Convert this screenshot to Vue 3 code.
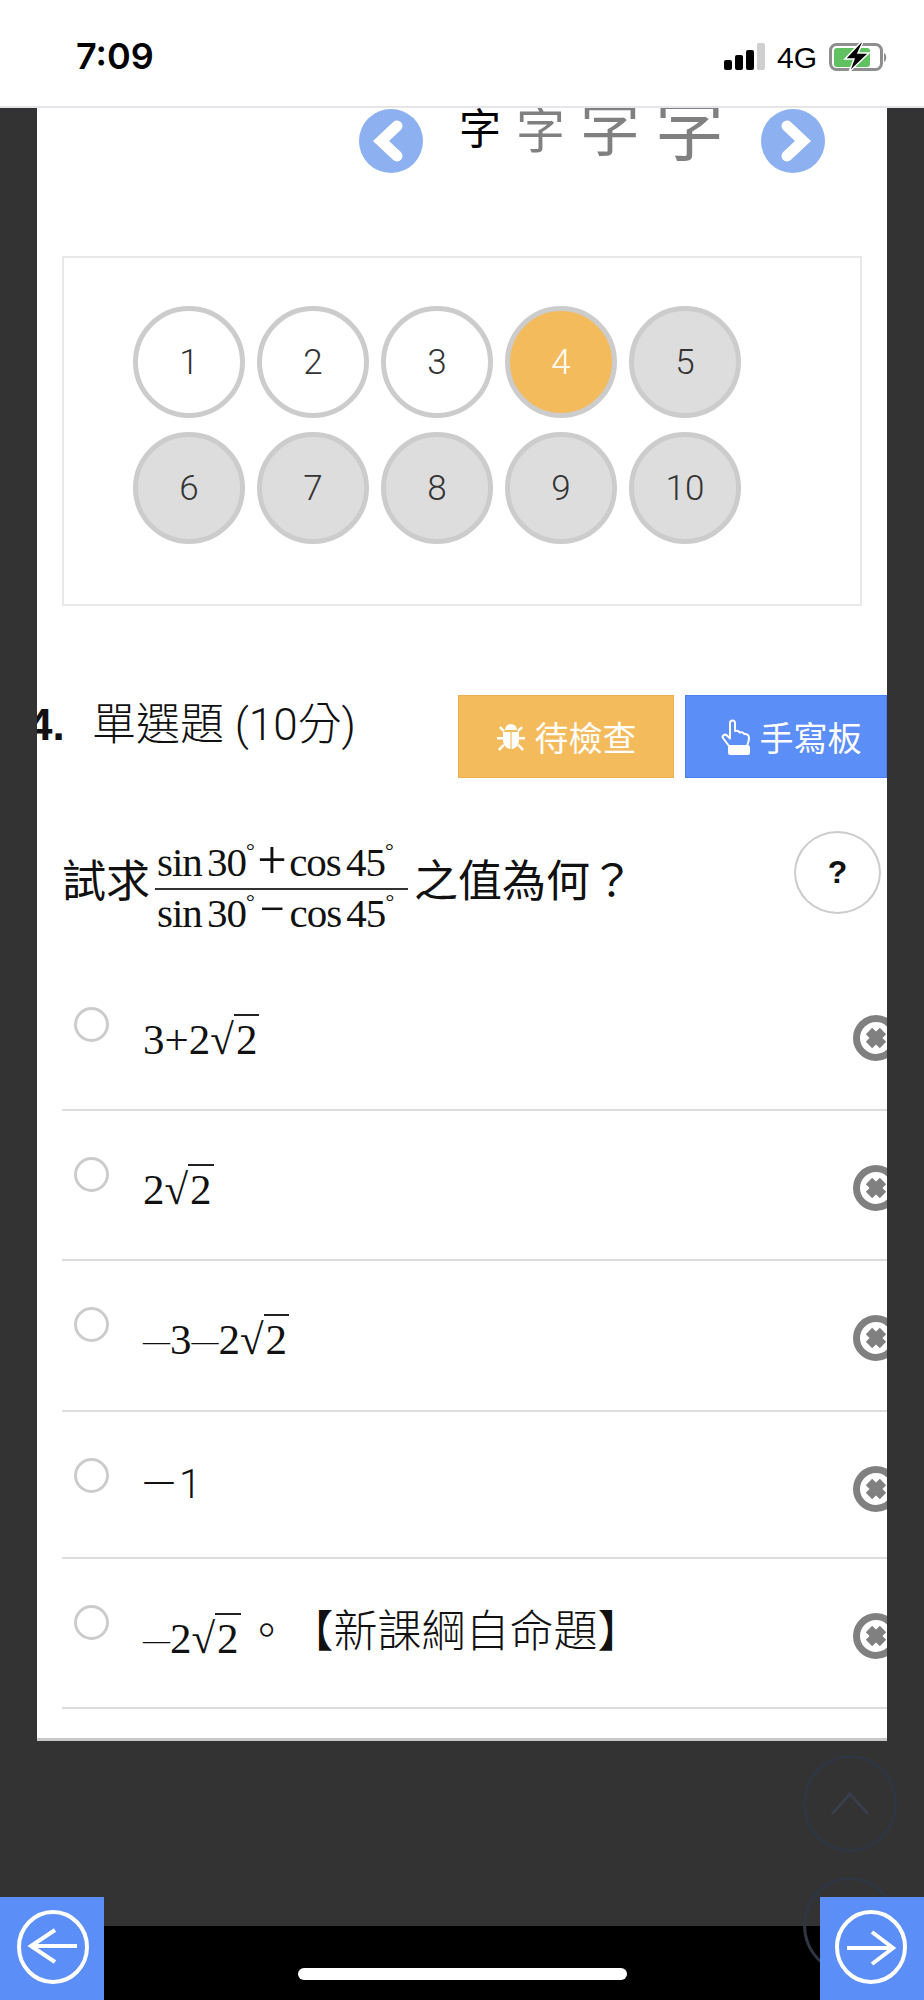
<template>
  <div class="phone">
    <header class="status">
      <span class="time">7:09</span>
      <div class="status-right">
        <div class="signal">
          <i v-for="bar in bars" :key="bar" :style="{ height: bar + 'px' }"></i>
          <i class="off"></i>
        </div>
        <span class="net">4G</span>
        <svg class="battery" width="60" height="30" viewBox="0 0 60 30">
          <rect x="2.500" y="2.500" width="51" height="25" rx="6" fill="none" stroke="#8e8e8e" stroke-width="3" />
          <rect x="6" y="6" width="36" height="19" rx="3" fill="#5fc15f" />
          <path d="M56 11c3 1 3 8 0 9z" fill="#8e8e8e" />
          <path d="M33 0 17 17h9l-5 13 20-19H30l5-11z" fill="#000" stroke="#fff" stroke-width="1.500" />
        </svg>
      </div>
    </header>

    <main class="stage">
      <section class="card">
        <div class="font-nav">
          <svg class="chev" viewBox="0 0 64 64">
            <circle cx="32" cy="32" r="32" fill="#8cb0f0" />
            <path d="M38 17 22 32l16 15" fill="none" stroke="#fff" stroke-width="11" stroke-linecap="round" />
          </svg>
          <div class="sizes">
            <span class="size s1">字</span>
            <span class="size s2">字</span>
            <span class="size s3">字</span>
            <span class="size s4">字</span>
          </div>
          <svg class="chev" viewBox="0 0 64 64">
            <circle cx="32" cy="32" r="32" fill="#8cb0f0" />
            <path d="M26 17l16 15-16 15" fill="none" stroke="#fff" stroke-width="11" stroke-linecap="round" />
          </svg>
        </div>

        <div class="pager">
          <span
            v-for="n in 10"
            :key="n"
            class="num"
            :class="{ current: n === 4, todo: n > 4 }"
          >{{ n }}</span>
        </div>

        <div class="q-head">
          <span class="q-title"><b class="q-no">4.</b>單選題 (10分)</span>
          <button class="btn btn-orange">
            <svg width="30" height="30" viewBox="0 0 30 30" fill="#fff">
              <path d="M9 8a6 6 0 0 1 12 0z" />
              <path d="M7 10h7.400v17C10 26.500 7 23 7 18z" />
              <path d="M15.600 10H23v8c0 5-3 8.500-7.400 9z" />
              <path d="M1 15h6v2.500H1zM23 15h6v2.500h-6zM3 6l1.800-1.800L9 8.500 7.200 10zM27 6l-1.800-1.800L21 8.500l1.800 1.500zM2 27l5-5 1.500 1.800L3.800 29zM28 27l-5-5-1.500 1.800 4.700 5.200z" />
            </svg>
            待檢查
          </button>
          <button class="btn btn-blue">
            <svg width="30" height="36" viewBox="0 0 30 36" fill="none" stroke="#fff" stroke-width="2" stroke-linejoin="round">
              <path d="M8 27 2 19c-1.500-2.500 2-4.500 4-2.500l3 3V4c0-3.500 5-3.500 5 0v8c3-1 4 .5 4.500 1.500 2-.8 4 0 4.500 1.500 3-.5 5 1 5 4 0 3-1 5-2 8z" />
              <rect x="8" y="27" width="20" height="8" rx="1.500" fill="#fff" />
            </svg>
            手寫板
          </button>
        </div>

        <div class="question">
          <span class="q-text">試求</span>
          <span class="frac">
            <span class="frac-top">sin 30<sup>°</sup><em>+</em>cos 45<sup>°</sup></span>
            <span class="frac-bot">sin 30<sup>°</sup><em>−</em>cos 45<sup>°</sup></span>
          </span>
          <span class="q-text">之值為何？</span>
          <span class="help">?</span>
        </div>

        <ul class="options">
          <li v-for="opt in options" :key="opt.id" class="option" :style="{ height: opt.height + 'px' }">
            <span class="radio"></span>
            <span class="answer">
              <template v-if="opt.plain"><span class="plain">{{ opt.plain }}</span></template>
              <template v-else>
                <span class="math">
                  <template v-for="(ch, i) in opt.before" :key="i">
                    <span v-if="ch === '—'" class="dash">—</span>
                    <template v-else>{{ ch }}</template>
                  </template><span class="rad">√</span><span class="root">2</span>
                </span>
                <span v-if="opt.tail" class="tail">。<span class="source">【新課綱自命題】</span></span>
              </template>
            </span>
            <svg class="strike" width="46" height="46" viewBox="0 0 46 46">
              <circle cx="23" cy="23" r="19.500" fill="#fff" stroke="#808080" stroke-width="7" />
              <path d="M16 16l14 14M30 16 16 30" stroke="#808080" stroke-width="9" />
            </svg>
          </li>
        </ul>
      </section>

      <span class="ghost ghost-up">
        <svg width="40" height="24" viewBox="0 0 40 24" fill="none" stroke="#383e4a" stroke-width="3">
          <path d="M2 22 20 2l18 20" />
        </svg>
      </span>
      <span class="ghost ghost-down"></span>
    </main>

    <footer class="home"><span class="home-bar"></span></footer>

    <a class="corner corner-left">
      <svg width="104" height="103" viewBox="0 0 104 103" fill="none" stroke="#fff" stroke-width="4">
        <ellipse cx="53" cy="50" rx="34" ry="35" />
        <path d="M77 49H31M55 33 31 49l24 16" />
      </svg>
    </a>
    <a class="corner corner-right">
      <svg width="104" height="103" viewBox="0 0 104 103" fill="none" stroke="#fff" stroke-width="4">
        <ellipse cx="51" cy="50" rx="34" ry="35" />
        <path d="M27 51h46M52 35l21 16-21 16" />
      </svg>
    </a>
  </div>
</template>

<script setup>
const bars = [10, 15, 20]

const options = [
  { id: 1, before: '3+2', height: 150 },
  { id: 2, before: '2', height: 150 },
  { id: 3, before: '—3—2', height: 151 },
  { id: 4, plain: '－1', height: 147 },
  { id: 5, before: '—2', tail: true, height: 150 }
]
</script>

<style>
html, body {
  margin: 0;
  background: #333;
}
</style>

<style scoped>
.phone {
  position: relative;
  width: 924px;
  height: 2000px;
  display: flex;
  flex-direction: column;
  overflow: hidden;
  background: #333;
  color: #111;
  font-family: Roboto, "Noto Sans CJK TC", sans-serif;
}

.status {
  height: 106px;
  flex: none;
  display: flex;
  justify-content: space-between;
  padding: 0 36px 0 76px;
  background: #fff;
  border-bottom: 2px solid #e5e5ea;
}

.time {
  font-family: Inter, sans-serif;
  font-weight: 600;
  font-size: 36px;
  line-height: 36px;
  margin-top: 38px;
  color: #000;
}

.status-right {
  display: flex;
  align-items: flex-start;
  padding-top: 42px;
}

.signal {
  display: flex;
  align-items: flex-end;
  gap: 3px;
  height: 27px;
  margin-top: 1px;
}

.signal i {
  width: 8px;
  border-radius: 2px;
  background: #000;
}

.signal .off {
  height: 27px;
  background: #cfcfcf;
}

.net {
  margin-left: 12px;
  margin-top: 2px;
  font-family: "Liberation Sans", sans-serif;
  font-size: 30px;
  line-height: 27px;
  color: #000;
}

.battery {
  margin-left: 11px;
}

.stage {
  position: relative;
  flex: 1;
  padding: 0 37px;
}

.card {
  height: 1630px;
  overflow: hidden;
  background: #fff;
  border-bottom: 3px solid #c8c8c8;
}

.font-nav {
  height: 149px;
  display: flex;
  align-items: flex-start;
  padding-left: 322px;
  margin-bottom: -1px;
}

.chev {
  width: 64px;
  height: 64px;
  flex: none;
  margin-top: 1px;
}

.sizes {
  display: flex;
  width: 338px;
  gap: 15px;
  padding-left: 36px;
  box-sizing: border-box;
}

.size {
  color: #808080;
  line-height: 1;
}

.s1 { font-size: 42px; color: #000; margin-top: 1px; }
.s2 { font-size: 49px; margin-top: -1px; }
.s3 { font-size: 60px; margin-top: -7px; }
.s4 { font-size: 69px; margin-top: -11px; }

.pager {
  height: 350px;
  box-sizing: border-box;
  margin: 0 25px;
  padding: 48px 0 0 69px;
  border: 2px solid #e8e8e8;
  display: grid;
  grid-template-columns: repeat(5, 112px);
  grid-auto-rows: 112px;
  column-gap: 12px;
  row-gap: 14px;
}

.num {
  display: flex;
  align-items: center;
  justify-content: center;
  box-sizing: border-box;
  border: 5px solid #ccc;
  border-radius: 50%;
  background: #fff;
  font-size: 35px;
  font-weight: 300;
  color: #333;
}

.num.todo {
  background: #ddd;
}

.num.current {
  background: #f4bb5d;
  color: #fff;
}

.q-head {
  height: 83px;
  margin-top: 89px;
  display: flex;
  align-items: flex-start;
}

.q-title {
  flex: 1;
  margin-left: -9px;
  margin-top: 6px;
  font-size: 44px;
  font-weight: 300;
  line-height: 48px;
  white-space: nowrap;
}

.q-no {
  display: inline-block;
  width: 64px;
  font-weight: 700;
  font-family: "Liberation Sans", sans-serif;
}

.btn {
  height: 83px;
  display: flex;
  align-items: center;
  justify-content: center;
  gap: 9px;
  box-sizing: border-box;
  border: 1px solid;
  border-radius: 0;
  color: #fff;
  font: inherit;
  font-size: 34px;
  padding: 0;
}

.btn-orange {
  width: 216px;
  background: #f4bb5d;
  border-color: #eeb04c;
}

.btn-blue {
  width: 202px;
  margin-left: 11px;
  padding-left: 10px;
  background: #5b8ef7;
  border-color: #4a80f0;
}

.question {
  position: relative;
  height: 130px;
  margin-top: 53px;
  padding-left: 25px;
  display: flex;
  align-items: flex-start;
  box-sizing: border-box;
}

.q-text {
  font-size: 44px;
  line-height: 50px;
  margin-top: 26px;
}

.frac {
  display: inline-flex;
  flex-direction: column;
  width: 253px;
  margin: 5px 6px 0 5px;
  font-family: "Liberation Serif", serif;
  font-size: 41px;
  color: #111;
}

.frac-top,
.frac-bot {
  display: block;
  padding-left: 2px;
  white-space: nowrap;
  letter-spacing: -1px;
  word-spacing: -4px;
}

.frac-top {
  line-height: 52px;
  border-bottom: 2px solid #333;
}

.frac-bot {
  line-height: 46px;
}

.frac sup {
  font-size: 22px;
  line-height: 0;
  vertical-align: 18px;
}

.frac em {
  font-family: Roboto, sans-serif;
  font-style: normal;
  font-weight: 300;
  font-size: 50px;
  line-height: 0;
  margin: 0 4px;
}

.help {
  position: absolute;
  right: 6px;
  top: 0;
  width: 87px;
  height: 83px;
  box-sizing: border-box;
  border: 2px solid #ccc;
  border-radius: 50%;
  display: flex;
  align-items: center;
  justify-content: center;
  font-family: "Liberation Sans", sans-serif;
  font-size: 32px;
  font-weight: 700;
}

.options {
  list-style: none;
  margin: 0 0 0 25px;
  padding: 0;
}

.option {
  display: flex;
  align-items: flex-start;
  box-sizing: border-box;
  padding-left: 12px;
  border-bottom: 2px solid #ddd;
}

.radio {
  width: 35px;
  height: 35px;
  flex: none;
  box-sizing: border-box;
  margin-top: 46px;
  border: 3px solid #ccc;
  border-radius: 50%;
  background: #fff;
}

.answer {
  flex: 1;
  margin-left: 34px;
  margin-top: 55px;
  display: flex;
  align-items: baseline;
  line-height: 48px;
  white-space: nowrap;
}

.math {
  display: inline-block;
  font-family: "Liberation Serif", serif;
  font-size: 43px;
}

.dash {
  position: relative;
  top: -4px;
  font-size: 27px;
}

.root {
  border-top: 2px solid #222;
  padding: 0 2px;
}

.plain {
  position: relative;
  top: -6px;
  left: -4px;
  font-size: 40px;
  font-weight: 300;
}

.tail {
  position: relative;
  top: -6px;
  margin-left: 4px;
  font-size: 44px;
  font-weight: 300;
}

.source {
  margin-left: 23px;
}

.strike {
  flex: none;
  margin-top: 54px;
  margin-right: -12px;
}

.ghost {
  position: absolute;
  right: 27px;
  width: 94px;
  height: 97px;
  box-sizing: border-box;
  border: 3px solid #2f3642;
  border-radius: 50%;
  display: flex;
  align-items: center;
  justify-content: center;
}

.ghost-up {
  top: 1647px;
}

.ghost-down {
  top: 1769px;
  z-index: 1;
}

.home {
  position: relative;
  height: 74px;
  flex: none;
  background: #000;
}

.home-bar {
  position: absolute;
  left: 298px;
  top: 42px;
  width: 329px;
  height: 12px;
  border-radius: 6px;
  background: #fff;
}

.corner {
  position: absolute;
  bottom: 0;
  width: 104px;
  height: 103px;
  background: #5b8ef7;
  z-index: 2;
}

.corner-left {
  left: 0;
}

.corner-right {
  right: 0;
}
</style>
